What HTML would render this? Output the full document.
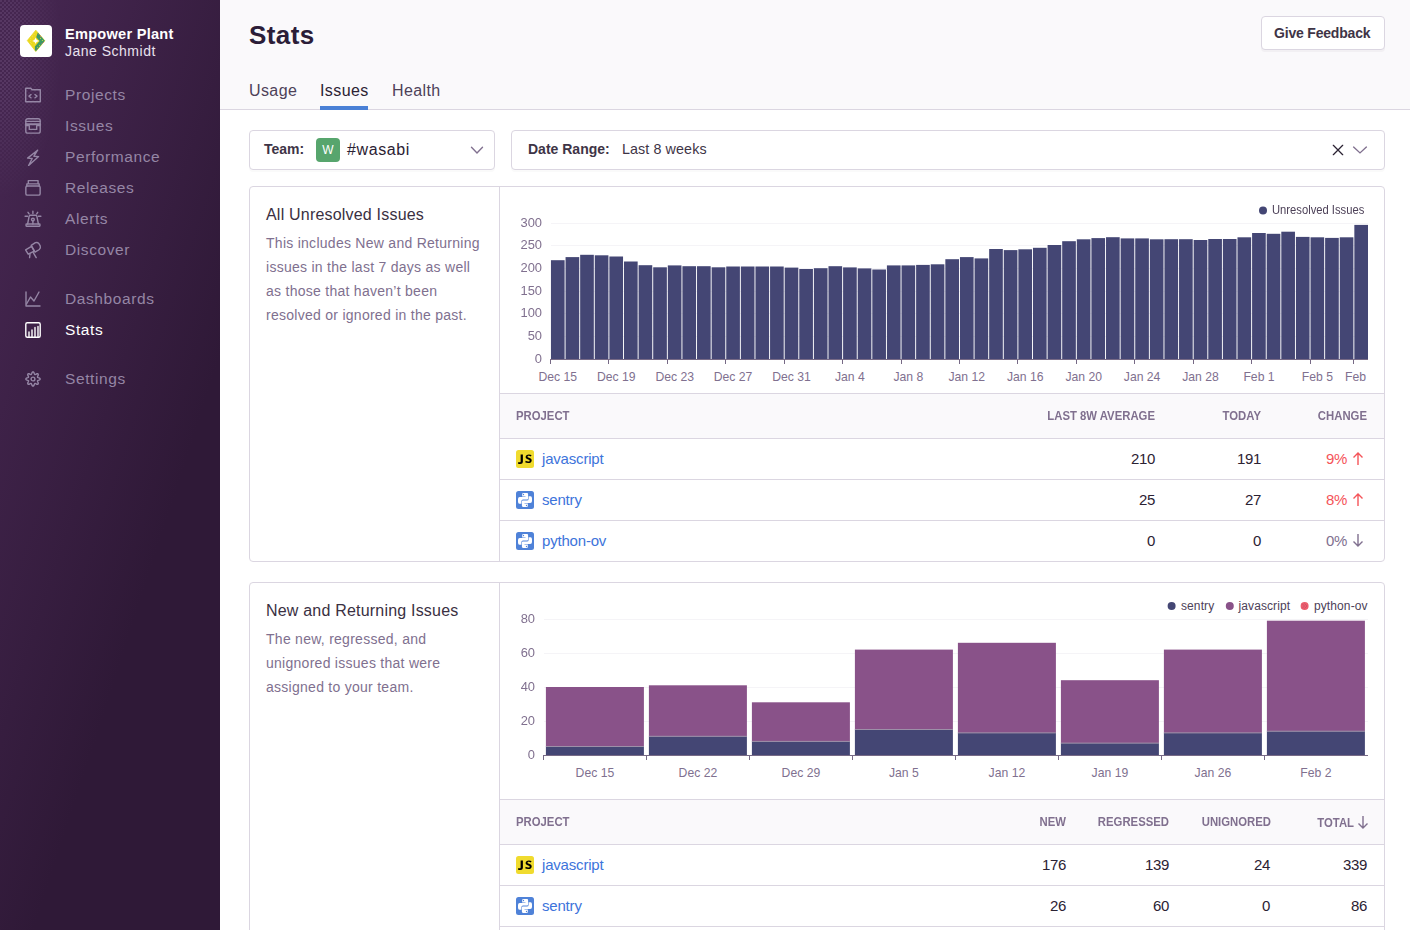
<!DOCTYPE html>
<html><head><meta charset="utf-8">
<style>
*{box-sizing:border-box;margin:0;padding:0}
html,body{width:1410px;height:930px;overflow:hidden;background:#fff;font-family:"Liberation Sans",sans-serif;color:#2b2233}
.abs{position:absolute}
#sidebar{position:absolute;left:0;top:0;width:220px;height:930px;background:linear-gradient(288deg,#2f1937 35.57%,#452650 92.42%)}
.nav{position:absolute;left:65px;font-size:15.5px;color:#9586a5;letter-spacing:0.6px;line-height:18px;white-space:nowrap}
.nav.active{color:#fff}
.nicon{position:absolute;left:24px;width:18px;height:18px}
#header{position:absolute;left:220px;top:0;width:1190px;height:110px;background:#faf9fb;border-bottom:1px solid #dbd6e1}
.tab{position:absolute;top:81.5px;font-size:16px;color:#4d4158;line-height:18px;letter-spacing:0.4px;white-space:nowrap}
.box{position:absolute;border:1px solid #dbd6e1;border-radius:4px;background:#fff;box-shadow:0 2px 0 rgba(43,34,51,0.025)}
.panel{position:absolute;left:249px;width:1136px;border:1px solid #dbd6e1;border-radius:4px;background:transparent;overflow:hidden}
.ptitle{position:absolute;left:16px;font-size:16px;letter-spacing:0.2px;color:#3a3042;white-space:nowrap;line-height:20px}
.pdesc{position:absolute;left:16px;font-size:14px;letter-spacing:0.27px;color:#80708f;line-height:24px;white-space:nowrap}
.divider{position:absolute;left:249px;top:0;width:1px;background:#dbd6e1}
.ylab{position:absolute;font-size:12px;color:#80708f;text-align:right;width:40px;line-height:14px;transform:scaleX(1.075);transform-origin:100% 50%}
.xlab{position:absolute;font-size:12.2px;color:#80708f;line-height:14px;white-space:nowrap;text-align:center;width:60px}
.th{position:absolute;font-size:12.2px;font-weight:bold;color:#80708f;line-height:14px;white-space:nowrap;text-transform:uppercase;transform:scaleX(0.93);transform-origin:100% 50%}
.th.l{transform-origin:0 50%}
.td{position:absolute;font-size:15px;letter-spacing:-0.35px;color:#2b2233;line-height:18px;white-space:nowrap;text-align:right}
.proj{position:absolute;font-size:15px;letter-spacing:-0.19px;color:#3d74db;line-height:18px;white-space:nowrap}
.hline{position:absolute;left:250px;width:886px;height:1px;background:#dbd6e1}
.thead{position:absolute;left:250px;width:886px;background:#faf9fb}

</style></head>
<body>
<div id="sidebar">
<div class="abs" style="left:0;top:0;width:70px;height:220px;background-image:radial-gradient(circle at 1px 1px, rgba(190,160,210,0.3) 0.5px, rgba(190,160,210,0) 0.9px),radial-gradient(circle at 3px 3px, rgba(190,160,210,0.3) 0.5px, rgba(190,160,210,0) 0.9px);background-size:4px 4px;-webkit-mask-image:radial-gradient(ellipse 62px 150px at 0 50px, #000 25%, transparent 100%);mask-image:radial-gradient(ellipse 62px 150px at 0 50px, #000 25%, transparent 100%)"></div>
<div class="abs" style="left:20px;top:25px;width:32px;height:32px;background:#fff;border-radius:4px"><svg width="32" height="32" viewBox="0 0 32 32" style="position:absolute;left:0;top:0"><path d="M15.8 5.2L24.8 15.8 15.8 26.5 7.3 15.6Z" fill="#ead81f" stroke="#ead81f" stroke-width="0.8" stroke-linejoin="round"/><path d="M17.8 7.6L24.8 15.8 15.9 26.3 14.9 25.1V21.4L19.6 16 16.2 12.3Z" fill="#3b9a64"/><path d="M15.6 12.6Q16 15.4 19.4 15.9 16 16.4 15.6 19.2 15.2 16.4 12.2 15.9 15.2 15.4 15.6 12.6Z" fill="#fff"/><g fill="#f4e86a"><circle cx="12.2" cy="10.9" r=".45"/><circle cx="14.1" cy="9.6" r=".45"/><circle cx="10.4" cy="13.3" r=".45"/><circle cx="10.4" cy="15.4" r=".45"/><circle cx="10.4" cy="17.5" r=".45"/><circle cx="12.2" cy="11.8" r=".45"/><circle cx="14.2" cy="19.9" r=".45"/><circle cx="11.5" cy="18.6" r=".45"/></g><g><circle cx="20.5" cy="13.3" r=".55" fill="#e5d73a"/><circle cx="22.4" cy="15.5" r=".55" fill="#e5d73a"/><circle cx="20.5" cy="11.5" r=".5" fill="#e0607a"/><circle cx="23.6" cy="17.5" r=".5" fill="#e0607a"/><circle cx="19.4" cy="20.2" r=".55" fill="#e5d73a"/><circle cx="17.4" cy="22.3" r=".55" fill="#e5d73a"/><circle cx="21.4" cy="18.3" r=".5" fill="#8a5aa6"/><circle cx="16.5" cy="24" r=".5" fill="#8a5aa6"/><circle cx="18.5" cy="9.5" r=".5" fill="#8a5aa6"/></g></svg></div>
<div class="abs" style="left:65px;top:25.5px;font-size:14.6px;font-weight:bold;color:#fff;line-height:17px;white-space:nowrap;letter-spacing:0.24px">Empower Plant</div>
<div class="abs" style="left:65px;top:43px;font-size:14px;color:#e8e1ee;line-height:17px;white-space:nowrap;letter-spacing:0.5px">Jane Schmidt</div>
<div class="nav" style="top:86px">Projects</div>
<div class="nav" style="top:117px">Issues</div>
<div class="nav" style="top:148px">Performance</div>
<div class="nav" style="top:179px">Releases</div>
<div class="nav" style="top:210px">Alerts</div>
<div class="nav" style="top:241px">Discover</div>
<div class="nav" style="top:290px">Dashboards</div>
<div class="nav active" style="top:321px">Stats</div>
<div class="nav" style="top:370px">Settings</div>
<svg class="nicon" style="top:86px" viewBox="0 0 18 18" fill="none" stroke="#9586a5" stroke-width="1.4" stroke-linejoin="round" stroke-linecap="round"><path d="M1.7 2.2h5l1.3 1.6h8.3v12H1.7z"/><path d="M7 8.5l-2 1.6 2 1.6M11 8.5l2 1.6-2 1.6"/></svg>
<svg class="nicon" style="top:117px" viewBox="0 0 18 18" fill="none" stroke="#9586a5" stroke-width="1.4" stroke-linejoin="round" stroke-linecap="round"><rect x="1.8" y="1.7" width="14.4" height="14.45" rx="2"/><path d="M1.8 4.4h14.4"/><path d="M1.8 7.3h14.4" stroke-width="1.9"/><path d="M1.8 8.6h3.5v3.8h7.4V8.6h3.5"/></svg>
<svg class="nicon" style="top:148px" viewBox="0 0 18 18" fill="none" stroke="#9586a5" stroke-width="1.4" stroke-linejoin="round" stroke-linecap="round"><path d="M13.6 2.2L3.6 10.1l4.6.4-3.6 7 10-8.9-4.7-.4z"/></svg>
<svg class="nicon" style="top:179px" viewBox="0 0 18 18" fill="none" stroke="#9586a5" stroke-width="1.4" stroke-linejoin="round" stroke-linecap="round"><rect x="1.85" y="7.05" width="14.3" height="9.1" rx="1.5"/><path d="M2.85 7.05V4.85h12.3v2.2M4.3 4.85V1.65h9.75v3.2"/></svg>
<svg class="nicon" style="top:210px" viewBox="0 0 18 18" fill="none" stroke="#9586a5" stroke-width="1.4" stroke-linejoin="round" stroke-linecap="round"><rect x="2.05" y="14" width="13.9" height="2.2" rx=".4"/><path d="M3.6 14l1.5-7.7q.2-1 1.2-1h5.4q1 0 1.2 1L14.4 14"/><circle cx="8.9" cy="9.6" r="1.4"/><path d="M8.9 11v3M8.9 1.1v2.4M4 2.3l1.1 1.6M13.7 2.3l-1 1.6M1.1 6.2h2.5M14.4 6.2h2.5"/></svg>
<svg class="nicon" style="top:241px" viewBox="0 0 18 18" fill="none" stroke="#9586a5" stroke-width="1.4" stroke-linejoin="round" stroke-linecap="round"><path d="M1.6 8.8L7.5 5.3 10.3 10.2 4.2 13.2Z"/><path d="M7.2 4.4L11.4 1.7Q13.5.9 14.9 2.6L16.2 4.8Q17 7.1 15.3 8.5L11 11.2Z"/><path d="M6 12.7l-.4 3.9M9.3 11.7l2.9 4.9"/></svg>
<svg class="nicon" style="top:290px" viewBox="0 0 18 18" fill="none" stroke="#9586a5" stroke-width="1.4" stroke-linejoin="round" stroke-linecap="round"><path d="M2 2v14h14"/><path d="M2.5 14l4-7 3.5 4 5-9"/></svg>
<svg class="nicon" style="top:321px" viewBox="0 0 18 18" fill="none" stroke="#fff" stroke-width="1.4" stroke-linejoin="round" stroke-linecap="round"><rect x="1.8" y="1.8" width="14.4" height="14.4" rx="1.5"/><path d="M5 15.5v-4.5M8 15.5V9M11 15.5V6.5M14 15.5v-10"/></svg>
<svg class="nicon" style="top:370px" viewBox="0 0 18 18" fill="none" stroke="#9586a5" stroke-width="1.4" stroke-linejoin="round" stroke-linecap="round"><path d="M16.15 9.00 L15.98 9.46 L15.52 9.86 L14.88 10.17 L14.24 10.40 L13.74 10.61 L13.48 10.86 L13.49 11.21 L13.70 11.71 L13.99 12.33 L14.22 13.00 L14.26 13.61 L14.06 14.06 L13.61 14.26 L13.00 14.22 L12.33 13.99 L11.71 13.70 L11.21 13.49 L10.86 13.48 L10.61 13.74 L10.40 14.24 L10.17 14.88 L9.86 15.52 L9.46 15.98 L9.00 16.15 L8.54 15.98 L8.14 15.52 L7.83 14.88 L7.60 14.24 L7.39 13.74 L7.14 13.48 L6.79 13.49 L6.29 13.70 L5.67 13.99 L5.00 14.22 L4.39 14.26 L3.94 14.06 L3.74 13.61 L3.78 13.00 L4.01 12.33 L4.30 11.71 L4.51 11.21 L4.52 10.86 L4.26 10.61 L3.76 10.40 L3.12 10.17 L2.48 9.86 L2.02 9.46 L1.85 9.00 L2.02 8.54 L2.48 8.14 L3.12 7.83 L3.76 7.60 L4.26 7.39 L4.52 7.14 L4.51 6.79 L4.30 6.29 L4.01 5.67 L3.78 5.00 L3.74 4.39 L3.94 3.94 L4.39 3.74 L5.00 3.78 L5.67 4.01 L6.29 4.30 L6.79 4.51 L7.14 4.52 L7.39 4.26 L7.60 3.76 L7.83 3.12 L8.14 2.48 L8.54 2.02 L9.00 1.85 L9.46 2.02 L9.86 2.48 L10.17 3.12 L10.40 3.76 L10.61 4.26 L10.86 4.52 L11.21 4.51 L11.71 4.30 L12.33 4.01 L13.00 3.78 L13.61 3.74 L14.06 3.94 L14.26 4.39 L14.22 5.00 L13.99 5.67 L13.70 6.29 L13.49 6.79 L13.48 7.14 L13.74 7.39 L14.24 7.60 L14.88 7.83 L15.52 8.14 L15.98 8.54Z"/><circle cx="9" cy="9" r="1.9"/></svg>
</div>
<div id="header">
<div class="abs" style="left:29px;top:20px;font-size:26px;font-weight:bold;color:#2b1d38;line-height:30px;letter-spacing:0.4px">Stats</div>
<div class="abs" style="left:1041px;top:16px;width:124px;height:34px;border:1px solid #dbd6e1;border-radius:4px;background:#fff;box-shadow:0 2px 0 rgba(43,34,51,0.04)"></div>
<div class="abs" style="left:1054px;top:25px;font-size:14px;font-weight:bold;color:#3e3446;line-height:16px;white-space:nowrap;letter-spacing:-0.19px">Give Feedback</div>
<div class="tab" style="left:29px">Usage</div>
<div class="tab" style="left:100px;color:#2b2233">Issues</div>
<div class="tab" style="left:172px">Health</div>
<div class="abs" style="left:100px;top:106px;width:48px;height:4px;background:#4a80d6"></div>
</div>
<div class="box" style="left:249px;top:130px;width:246px;height:40px"></div>
<div class="abs" style="left:264px;top:141px;font-size:14px;font-weight:bold;color:#3e3446;line-height:16px">Team:</div>
<div class="abs" style="left:316px;top:138px;width:24px;height:24px;background:#57a56d;border-radius:4px;color:#fff;font-size:12px;text-align:center;line-height:24px">W</div>
<div class="abs" style="left:347px;top:140px;font-size:16px;color:#2b2233;line-height:19px;letter-spacing:0.6px">#wasabi</div>
<svg class="abs" style="left:469px;top:144px" width="16" height="12" viewBox="0 0 16 12"><path d="M2.5 3.3L8 8.9l5.5-5.6" fill="none" stroke="#80708f" stroke-width="1.4" stroke-linecap="round"/></svg>
<div class="box" style="left:511px;top:130px;width:874px;height:40px"></div>
<div class="abs" style="left:528px;top:141px;font-size:14px;font-weight:bold;color:#3e3446;line-height:16px">Date Range:</div>
<div class="abs" style="left:622px;top:141px;font-size:14.3px;color:#3e3446;line-height:17px;letter-spacing:0.1px">Last 8 weeks</div>
<svg class="abs" style="left:1331px;top:143px" width="14" height="14" viewBox="0 0 14 14"><path d="M2.3 2.3l9.4 9.4M11.7 2.3l-9.4 9.4" fill="none" stroke="#2b2233" stroke-width="1.25" stroke-linecap="round"/></svg>
<svg class="abs" style="left:1351px;top:144px" width="18" height="12" viewBox="0 0 18 12"><path d="M2.6 3.1L9 8.9l6.4-5.8" fill="none" stroke="#80708f" stroke-width="1.4" stroke-linecap="round"/></svg>
<div class="panel" style="top:186px;height:376px">
<div class="divider" style="height:376px"></div>
<div class="ptitle" style="top:18px">All Unresolved Issues</div>
<div class="pdesc" style="top:44px">This includes New and Returning<br>issues in the last 7 days as well<br>as those that haven’t been<br>resolved or ignored in the past.</div>
</div>
<svg class="abs" style="left:0;top:0" width="1410" height="930" shape-rendering="crispEdges">
<rect x="551" y="336" width="817" height="1" fill="#f5f4f7"/>
<rect x="551" y="313" width="817" height="1" fill="#f5f4f7"/>
<rect x="551" y="291" width="817" height="1" fill="#f5f4f7"/>
<rect x="551" y="268" width="817" height="1" fill="#f5f4f7"/>
<rect x="551" y="245" width="817" height="1" fill="#f5f4f7"/>
<rect x="551" y="223" width="817" height="1" fill="#f5f4f7"/>
<rect x="550.95" y="260.2" width="13.66" height="98.8" fill="#444674" shape-rendering="geometricPrecision"/>
<rect x="565.56" y="257.1" width="13.66" height="101.9" fill="#444674" shape-rendering="geometricPrecision"/>
<rect x="580.16" y="254.8" width="13.66" height="104.2" fill="#444674" shape-rendering="geometricPrecision"/>
<rect x="594.77" y="255.3" width="13.66" height="103.7" fill="#444674" shape-rendering="geometricPrecision"/>
<rect x="609.38" y="256.5" width="13.66" height="102.5" fill="#444674" shape-rendering="geometricPrecision"/>
<rect x="623.99" y="261.5" width="13.66" height="97.5" fill="#444674" shape-rendering="geometricPrecision"/>
<rect x="638.59" y="265.2" width="13.66" height="93.8" fill="#444674" shape-rendering="geometricPrecision"/>
<rect x="653.20" y="267.3" width="13.66" height="91.7" fill="#444674" shape-rendering="geometricPrecision"/>
<rect x="667.81" y="265.4" width="13.66" height="93.6" fill="#444674" shape-rendering="geometricPrecision"/>
<rect x="682.41" y="266.2" width="13.66" height="92.8" fill="#444674" shape-rendering="geometricPrecision"/>
<rect x="697.02" y="266.2" width="13.66" height="92.8" fill="#444674" shape-rendering="geometricPrecision"/>
<rect x="711.63" y="267.3" width="13.66" height="91.7" fill="#444674" shape-rendering="geometricPrecision"/>
<rect x="726.23" y="266.5" width="13.66" height="92.5" fill="#444674" shape-rendering="geometricPrecision"/>
<rect x="740.84" y="266.5" width="13.66" height="92.5" fill="#444674" shape-rendering="geometricPrecision"/>
<rect x="755.45" y="266.5" width="13.66" height="92.5" fill="#444674" shape-rendering="geometricPrecision"/>
<rect x="770.06" y="266.5" width="13.66" height="92.5" fill="#444674" shape-rendering="geometricPrecision"/>
<rect x="784.66" y="267.6" width="13.66" height="91.4" fill="#444674" shape-rendering="geometricPrecision"/>
<rect x="799.27" y="269.0" width="13.66" height="90.0" fill="#444674" shape-rendering="geometricPrecision"/>
<rect x="813.88" y="268.2" width="13.66" height="90.8" fill="#444674" shape-rendering="geometricPrecision"/>
<rect x="828.48" y="266.2" width="13.66" height="92.8" fill="#444674" shape-rendering="geometricPrecision"/>
<rect x="843.09" y="267.4" width="13.66" height="91.6" fill="#444674" shape-rendering="geometricPrecision"/>
<rect x="857.70" y="268.4" width="13.66" height="90.6" fill="#444674" shape-rendering="geometricPrecision"/>
<rect x="872.30" y="269.5" width="13.66" height="89.5" fill="#444674" shape-rendering="geometricPrecision"/>
<rect x="886.91" y="265.4" width="13.66" height="93.6" fill="#444674" shape-rendering="geometricPrecision"/>
<rect x="901.52" y="265.4" width="13.66" height="93.6" fill="#444674" shape-rendering="geometricPrecision"/>
<rect x="916.12" y="264.9" width="13.66" height="94.1" fill="#444674" shape-rendering="geometricPrecision"/>
<rect x="930.73" y="264.3" width="13.66" height="94.7" fill="#444674" shape-rendering="geometricPrecision"/>
<rect x="945.34" y="259.2" width="13.66" height="99.8" fill="#444674" shape-rendering="geometricPrecision"/>
<rect x="959.95" y="257.1" width="13.66" height="101.9" fill="#444674" shape-rendering="geometricPrecision"/>
<rect x="974.55" y="258.4" width="13.66" height="100.6" fill="#444674" shape-rendering="geometricPrecision"/>
<rect x="989.16" y="249.0" width="13.66" height="110.0" fill="#444674" shape-rendering="geometricPrecision"/>
<rect x="1003.77" y="250.1" width="13.66" height="108.9" fill="#444674" shape-rendering="geometricPrecision"/>
<rect x="1018.37" y="249.3" width="13.66" height="109.7" fill="#444674" shape-rendering="geometricPrecision"/>
<rect x="1032.98" y="247.8" width="13.66" height="111.2" fill="#444674" shape-rendering="geometricPrecision"/>
<rect x="1047.59" y="245.0" width="13.66" height="114.0" fill="#444674" shape-rendering="geometricPrecision"/>
<rect x="1062.19" y="241.2" width="13.66" height="117.8" fill="#444674" shape-rendering="geometricPrecision"/>
<rect x="1076.80" y="239.3" width="13.66" height="119.7" fill="#444674" shape-rendering="geometricPrecision"/>
<rect x="1091.41" y="238.1" width="13.66" height="120.9" fill="#444674" shape-rendering="geometricPrecision"/>
<rect x="1106.02" y="237.2" width="13.66" height="121.8" fill="#444674" shape-rendering="geometricPrecision"/>
<rect x="1120.62" y="238.4" width="13.66" height="120.6" fill="#444674" shape-rendering="geometricPrecision"/>
<rect x="1135.23" y="238.4" width="13.66" height="120.6" fill="#444674" shape-rendering="geometricPrecision"/>
<rect x="1149.84" y="239.3" width="13.66" height="119.7" fill="#444674" shape-rendering="geometricPrecision"/>
<rect x="1164.44" y="239.2" width="13.66" height="119.8" fill="#444674" shape-rendering="geometricPrecision"/>
<rect x="1179.05" y="239.2" width="13.66" height="119.8" fill="#444674" shape-rendering="geometricPrecision"/>
<rect x="1193.66" y="240.0" width="13.66" height="119.0" fill="#444674" shape-rendering="geometricPrecision"/>
<rect x="1208.27" y="239.0" width="13.66" height="120.0" fill="#444674" shape-rendering="geometricPrecision"/>
<rect x="1222.87" y="239.0" width="13.66" height="120.0" fill="#444674" shape-rendering="geometricPrecision"/>
<rect x="1237.48" y="237.3" width="13.66" height="121.7" fill="#444674" shape-rendering="geometricPrecision"/>
<rect x="1252.09" y="233.0" width="13.66" height="126.0" fill="#444674" shape-rendering="geometricPrecision"/>
<rect x="1266.69" y="233.8" width="13.66" height="125.2" fill="#444674" shape-rendering="geometricPrecision"/>
<rect x="1281.30" y="231.7" width="13.66" height="127.3" fill="#444674" shape-rendering="geometricPrecision"/>
<rect x="1295.91" y="236.9" width="13.66" height="122.1" fill="#444674" shape-rendering="geometricPrecision"/>
<rect x="1310.51" y="237.3" width="13.66" height="121.7" fill="#444674" shape-rendering="geometricPrecision"/>
<rect x="1325.12" y="237.9" width="13.66" height="121.1" fill="#444674" shape-rendering="geometricPrecision"/>
<rect x="1339.73" y="237.3" width="13.66" height="121.7" fill="#444674" shape-rendering="geometricPrecision"/>
<rect x="1354.34" y="224.9" width="13.66" height="134.1" fill="#444674" shape-rendering="geometricPrecision"/>
<rect x="550" y="359" width="818" height="1" fill="#776a86"/>
<rect x="550" y="359" width="1" height="5" fill="#776a86"/>
<rect x="608" y="359" width="1" height="5" fill="#776a86"/>
<rect x="667" y="359" width="1" height="5" fill="#776a86"/>
<rect x="725" y="359" width="1" height="5" fill="#776a86"/>
<rect x="784" y="359" width="1" height="5" fill="#776a86"/>
<rect x="842" y="359" width="1" height="5" fill="#776a86"/>
<rect x="901" y="359" width="1" height="5" fill="#776a86"/>
<rect x="959" y="359" width="1" height="5" fill="#776a86"/>
<rect x="1017" y="359" width="1" height="5" fill="#776a86"/>
<rect x="1076" y="359" width="1" height="5" fill="#776a86"/>
<rect x="1134" y="359" width="1" height="5" fill="#776a86"/>
<rect x="1193" y="359" width="1" height="5" fill="#776a86"/>
<rect x="1251" y="359" width="1" height="5" fill="#776a86"/>
<rect x="1310" y="359" width="1" height="5" fill="#776a86"/>
<rect x="1353" y="359" width="1" height="5" fill="#776a86"/>
<rect x="544" y="721" width="824" height="1" fill="#f5f4f7"/>
<rect x="544" y="687" width="824" height="1" fill="#f5f4f7"/>
<rect x="544" y="653" width="824" height="1" fill="#f5f4f7"/>
<rect x="544" y="619" width="824" height="1" fill="#f5f4f7"/>
<rect x="545.9" y="687.0" width="98" height="59.5" fill="#895289" shape-rendering="geometricPrecision"/>
<rect x="545.9" y="746.5" width="98" height="8.5" fill="#444674" shape-rendering="geometricPrecision"/>
<rect x="545.9" y="746.0" width="98" height="1" fill="#9d90a8" shape-rendering="geometricPrecision"/>
<rect x="648.9" y="685.3" width="98" height="51.0" fill="#895289" shape-rendering="geometricPrecision"/>
<rect x="648.9" y="736.3" width="98" height="18.7" fill="#444674" shape-rendering="geometricPrecision"/>
<rect x="648.9" y="735.8" width="98" height="1" fill="#9d90a8" shape-rendering="geometricPrecision"/>
<rect x="751.9" y="702.3" width="98" height="39.1" fill="#895289" shape-rendering="geometricPrecision"/>
<rect x="751.9" y="741.4" width="98" height="13.6" fill="#444674" shape-rendering="geometricPrecision"/>
<rect x="751.9" y="740.9" width="98" height="1" fill="#9d90a8" shape-rendering="geometricPrecision"/>
<rect x="854.9" y="649.6" width="98" height="79.9" fill="#895289" shape-rendering="geometricPrecision"/>
<rect x="854.9" y="729.5" width="98" height="25.5" fill="#444674" shape-rendering="geometricPrecision"/>
<rect x="854.9" y="729.0" width="98" height="1" fill="#9d90a8" shape-rendering="geometricPrecision"/>
<rect x="957.9" y="642.8" width="98" height="90.1" fill="#895289" shape-rendering="geometricPrecision"/>
<rect x="957.9" y="732.9" width="98" height="22.1" fill="#444674" shape-rendering="geometricPrecision"/>
<rect x="957.9" y="732.4" width="98" height="1" fill="#9d90a8" shape-rendering="geometricPrecision"/>
<rect x="1060.9" y="680.2" width="98" height="62.9" fill="#895289" shape-rendering="geometricPrecision"/>
<rect x="1060.9" y="743.1" width="98" height="11.9" fill="#444674" shape-rendering="geometricPrecision"/>
<rect x="1060.9" y="742.6" width="98" height="1" fill="#9d90a8" shape-rendering="geometricPrecision"/>
<rect x="1163.9" y="649.6" width="98" height="83.3" fill="#895289" shape-rendering="geometricPrecision"/>
<rect x="1163.9" y="732.9" width="98" height="22.1" fill="#444674" shape-rendering="geometricPrecision"/>
<rect x="1163.9" y="732.4" width="98" height="1" fill="#9d90a8" shape-rendering="geometricPrecision"/>
<rect x="1266.9" y="620.7" width="98" height="110.5" fill="#895289" shape-rendering="geometricPrecision"/>
<rect x="1266.9" y="731.2" width="98" height="23.8" fill="#444674" shape-rendering="geometricPrecision"/>
<rect x="1266.9" y="730.7" width="98" height="1" fill="#9d90a8" shape-rendering="geometricPrecision"/>
<rect x="543" y="755" width="825" height="1" fill="#776a86"/>
<rect x="543" y="755" width="1" height="5" fill="#776a86"/>
<rect x="646" y="755" width="1" height="5" fill="#776a86"/>
<rect x="749" y="755" width="1" height="5" fill="#776a86"/>
<rect x="852" y="755" width="1" height="5" fill="#776a86"/>
<rect x="955" y="755" width="1" height="5" fill="#776a86"/>
<rect x="1058" y="755" width="1" height="5" fill="#776a86"/>
<rect x="1161" y="755" width="1" height="5" fill="#776a86"/>
<rect x="1264" y="755" width="1" height="5" fill="#776a86"/>
<circle cx="1263" cy="210.5" r="4" fill="#444674" shape-rendering="geometricPrecision"/>
<circle cx="1171.6" cy="606" r="4" fill="#444674" shape-rendering="geometricPrecision"/>
<circle cx="1229.8" cy="606" r="4" fill="#895289" shape-rendering="geometricPrecision"/>
<circle cx="1304.6" cy="606" r="4" fill="#ec5e6c" shape-rendering="geometricPrecision"/><path d="M1302 603.5l2.5 2.5-2.5 2.5M1304.5 603.5l2.5 2.5-2.5 2.5" fill="none" stroke="#c84a6a" stroke-width="0.7" shape-rendering="geometricPrecision"/>
</svg>
<div class="ylab" style="left:502px;top:351.5px">0</div>
<div class="ylab" style="left:502px;top:328.8px">50</div>
<div class="ylab" style="left:502px;top:306.2px">100</div>
<div class="ylab" style="left:502px;top:283.5px">150</div>
<div class="ylab" style="left:502px;top:260.8px">200</div>
<div class="ylab" style="left:502px;top:238.2px">250</div>
<div class="ylab" style="left:502px;top:215.5px">300</div>
<div class="xlab" style="left:527.8px;top:369.7px">Dec 15</div>
<div class="xlab" style="left:586.2px;top:369.7px">Dec 19</div>
<div class="xlab" style="left:644.7px;top:369.7px">Dec 23</div>
<div class="xlab" style="left:703.1px;top:369.7px">Dec 27</div>
<div class="xlab" style="left:761.5px;top:369.7px">Dec 31</div>
<div class="xlab" style="left:819.9px;top:369.7px">Jan 4</div>
<div class="xlab" style="left:878.4px;top:369.7px">Jan 8</div>
<div class="xlab" style="left:936.8px;top:369.7px">Jan 12</div>
<div class="xlab" style="left:995.2px;top:369.7px">Jan 16</div>
<div class="xlab" style="left:1053.7px;top:369.7px">Jan 20</div>
<div class="xlab" style="left:1112.1px;top:369.7px">Jan 24</div>
<div class="xlab" style="left:1170.5px;top:369.7px">Jan 28</div>
<div class="xlab" style="left:1229.0px;top:369.7px">Feb 1</div>
<div class="xlab" style="left:1287.4px;top:369.7px">Feb 5</div>
<div class="xlab" style="left:1325.6px;top:369.7px">Feb</div>
<div class="abs" style="left:1272px;top:203.3px;font-size:12px;color:#4d4158;line-height:14px;white-space:nowrap;transform:scaleX(0.935);transform-origin:0 50%">Unresolved Issues</div>
<div class="abs" style="left:500px;top:393px;width:884px;height:46px;background:#faf9fb;border-top:1px solid #dbd6e1;border-bottom:1px solid #dbd6e1"></div>
<div class="abs" style="left:500px;top:479px;width:884px;height:1px;background:#dbd6e1"></div>
<div class="abs" style="left:500px;top:520px;width:884px;height:1px;background:#dbd6e1"></div>
<div class="th l" style="left:516px;top:409.2px">Project</div>
<div class="th" style="left:955px;top:409.2px;width:200px;text-align:right">Last 8W Average</div>
<div class="th" style="left:1161px;top:409.2px;width:100px;text-align:right">Today</div>
<div class="th" style="left:1267px;top:409.2px;width:100px;text-align:right">Change</div>
<div class="abs" style="left:516px;top:450px;width:18px;height:18px;background:#f0db2e;border-radius:2.5px;"><svg width="18" height="18" viewBox="0 0 18 18" style="position:absolute;left:0;top:0"><g transform="matrix(1.19 0 0 1.044 -1.79 -0.3)"><path d="M7.3 4.6v6.6c0 1.6-.8 2.4-2.3 2.4-.8 0-1.4-.2-1.9-.5l.4-1.3c.3.2.7.3 1.1.3.5 0 .8-.3.8-1.1V4.6z" fill="#000"/><path d="M14.6 5.2c-.5-.4-1.3-.7-2.2-.7-1.7 0-2.8 1-2.8 2.4 0 1.3.9 1.9 2.1 2.4 1 .4 1.3.7 1.3 1.2s-.4.9-1.2.9c-.8 0-1.6-.4-2.1-.8l-.5 1.4c.6.5 1.5.8 2.5.8 1.9 0 3-1 3-2.5 0-1.3-.8-2-2.2-2.5-1-.4-1.3-.6-1.3-1.1 0-.4.3-.8 1-.8.7 0 1.3.3 1.7.6z" fill="#000"/></g></svg></div>
<div class="proj" style="left:542px;top:450px">javascript</div>
<div class="td" style="left:1055px;width:100px;top:450px">210</div>
<div class="td" style="left:1161px;width:100px;top:450px">191</div>
<div class="td" style="left:1247px;width:100px;top:450px;color:#f55459">9%</div>
<svg class="abs" style="left:1351px;top:451px" width="14" height="15" viewBox="0 0 14 15"><path d="M7 2v12M2.5 6.5L7 2l4.5 4.5" fill="none" stroke="#f55459" stroke-width="1.4"/></svg>
<div class="abs" style="left:516px;top:491px;width:18px;height:18px;background:#4f82d8;border-radius:2.5px;"><svg width="18" height="18" viewBox="0 0 18 18" style="position:absolute;left:0;top:0"><path d="M6.3 2.1H11Q12.1 2.1 12.1 3.2V7.5Q12.1 8.5 11.1 8.5H7Q5.4 8.5 5.4 10.1V12.7H3.4Q2 12.7 2 10.5V8Q2 5.9 3.8 5.9H9.5V5.4H6.2V3.1Q6.2 2.1 7.2 2.1Z" fill="#fff"/><path d="M6.3 2.1H11Q12.1 2.1 12.1 3.2V7.5Q12.1 8.5 11.1 8.5H7Q5.4 8.5 5.4 10.1V12.7H3.4Q2 12.7 2 10.5V8Q2 5.9 3.8 5.9H9.5V5.4H6.2V3.1Q6.2 2.1 7.2 2.1Z" fill="#fff" transform="rotate(180 9 9)"/><circle cx="7.5" cy="3.5" r=".65" fill="#4f82d8"/><circle cx="10.5" cy="14.5" r=".65" fill="#4f82d8"/></svg></div>
<div class="proj" style="left:542px;top:491px">sentry</div>
<div class="td" style="left:1055px;width:100px;top:491px">25</div>
<div class="td" style="left:1161px;width:100px;top:491px">27</div>
<div class="td" style="left:1247px;width:100px;top:491px;color:#f55459">8%</div>
<svg class="abs" style="left:1351px;top:492px" width="14" height="15" viewBox="0 0 14 15"><path d="M7 2v12M2.5 6.5L7 2l4.5 4.5" fill="none" stroke="#f55459" stroke-width="1.4"/></svg>
<div class="abs" style="left:516px;top:532px;width:18px;height:18px;background:#4f82d8;border-radius:2.5px;"><svg width="18" height="18" viewBox="0 0 18 18" style="position:absolute;left:0;top:0"><path d="M6.3 2.1H11Q12.1 2.1 12.1 3.2V7.5Q12.1 8.5 11.1 8.5H7Q5.4 8.5 5.4 10.1V12.7H3.4Q2 12.7 2 10.5V8Q2 5.9 3.8 5.9H9.5V5.4H6.2V3.1Q6.2 2.1 7.2 2.1Z" fill="#fff"/><path d="M6.3 2.1H11Q12.1 2.1 12.1 3.2V7.5Q12.1 8.5 11.1 8.5H7Q5.4 8.5 5.4 10.1V12.7H3.4Q2 12.7 2 10.5V8Q2 5.9 3.8 5.9H9.5V5.4H6.2V3.1Q6.2 2.1 7.2 2.1Z" fill="#fff" transform="rotate(180 9 9)"/><circle cx="7.5" cy="3.5" r=".65" fill="#4f82d8"/><circle cx="10.5" cy="14.5" r=".65" fill="#4f82d8"/></svg></div>
<div class="proj" style="left:542px;top:532px">python-ov</div>
<div class="td" style="left:1055px;width:100px;top:532px">0</div>
<div class="td" style="left:1161px;width:100px;top:532px">0</div>
<div class="td" style="left:1247px;width:100px;top:532px;color:#80708f">0%</div>
<svg class="abs" style="left:1351px;top:533px" width="14" height="15" viewBox="0 0 14 15"><path d="M7 1v12M2.5 8.5L7 13l4.5-4.5" fill="none" stroke="#80708f" stroke-width="1.4"/></svg>
<div class="panel" style="top:582px;height:400px">
<div class="divider" style="height:400px"></div>
<div class="ptitle" style="top:18px">New and Returning Issues</div>
<div class="pdesc" style="top:44px">The new, regressed, and<br>unignored issues that were<br>assigned to your team.</div>
</div>
<div class="ylab" style="left:495px;top:748.0px">0</div>
<div class="ylab" style="left:495px;top:714.0px">20</div>
<div class="ylab" style="left:495px;top:680.0px">40</div>
<div class="ylab" style="left:495px;top:646.0px">60</div>
<div class="ylab" style="left:495px;top:612.0px">80</div>
<div class="xlab" style="left:564.9px;top:766px">Dec 15</div>
<div class="xlab" style="left:667.9px;top:766px">Dec 22</div>
<div class="xlab" style="left:770.9px;top:766px">Dec 29</div>
<div class="xlab" style="left:873.9px;top:766px">Jan 5</div>
<div class="xlab" style="left:976.9px;top:766px">Jan 12</div>
<div class="xlab" style="left:1079.9px;top:766px">Jan 19</div>
<div class="xlab" style="left:1182.9px;top:766px">Jan 26</div>
<div class="xlab" style="left:1285.9px;top:766px">Feb 2</div>
<div class="abs" style="left:1181px;top:599.3px;font-size:12px;color:#4d4158;line-height:14px;white-space:nowrap;letter-spacing:0.1px">sentry</div>
<div class="abs" style="left:1238.5px;top:599.3px;font-size:12px;color:#4d4158;line-height:14px;white-space:nowrap;letter-spacing:0.1px">javascript</div>
<div class="abs" style="left:1314px;top:599.3px;font-size:12px;color:#4d4158;line-height:14px;white-space:nowrap;letter-spacing:0.1px">python-ov</div>
<div class="abs" style="left:500px;top:799px;width:884px;height:46px;background:#faf9fb;border-top:1px solid #dbd6e1;border-bottom:1px solid #dbd6e1"></div>
<div class="abs" style="left:500px;top:885px;width:884px;height:1px;background:#dbd6e1"></div>
<div class="abs" style="left:500px;top:926px;width:884px;height:1px;background:#dbd6e1"></div>
<div class="th l" style="left:516px;top:815.2px">Project</div>
<div class="th" style="left:966px;top:815.2px;width:100px;text-align:right">New</div>
<div class="th" style="left:1069px;top:815.2px;width:100px;text-align:right">Regressed</div>
<div class="th" style="left:1171px;top:815.2px;width:100px;text-align:right">Unignored</div>
<div class="th" style="left:1253.7px;top:816px;width:100px;text-align:right">Total</div>
<svg class="abs" style="left:1355.5px;top:814.5px" width="14" height="15" viewBox="0 0 14 15"><path d="M7 1v12M2.5 8.5L7 13l4.5-4.5" fill="none" stroke="#80708f" stroke-width="1.4"/></svg>
<div class="abs" style="left:516px;top:856px;width:18px;height:18px;background:#f0db2e;border-radius:2.5px;"><svg width="18" height="18" viewBox="0 0 18 18" style="position:absolute;left:0;top:0"><g transform="matrix(1.19 0 0 1.044 -1.79 -0.3)"><path d="M7.3 4.6v6.6c0 1.6-.8 2.4-2.3 2.4-.8 0-1.4-.2-1.9-.5l.4-1.3c.3.2.7.3 1.1.3.5 0 .8-.3.8-1.1V4.6z" fill="#000"/><path d="M14.6 5.2c-.5-.4-1.3-.7-2.2-.7-1.7 0-2.8 1-2.8 2.4 0 1.3.9 1.9 2.1 2.4 1 .4 1.3.7 1.3 1.2s-.4.9-1.2.9c-.8 0-1.6-.4-2.1-.8l-.5 1.4c.6.5 1.5.8 2.5.8 1.9 0 3-1 3-2.5 0-1.3-.8-2-2.2-2.5-1-.4-1.3-.6-1.3-1.1 0-.4.3-.8 1-.8.7 0 1.3.3 1.7.6z" fill="#000"/></g></svg></div>
<div class="proj" style="left:542px;top:856px">javascript</div>
<div class="td" style="left:966px;width:100px;top:856px">176</div>
<div class="td" style="left:1069px;width:100px;top:856px">139</div>
<div class="td" style="left:1170px;width:100px;top:856px">24</div>
<div class="td" style="left:1267px;width:100px;top:856px">339</div>
<div class="abs" style="left:516px;top:897px;width:18px;height:18px;background:#4f82d8;border-radius:2.5px;"><svg width="18" height="18" viewBox="0 0 18 18" style="position:absolute;left:0;top:0"><path d="M6.3 2.1H11Q12.1 2.1 12.1 3.2V7.5Q12.1 8.5 11.1 8.5H7Q5.4 8.5 5.4 10.1V12.7H3.4Q2 12.7 2 10.5V8Q2 5.9 3.8 5.9H9.5V5.4H6.2V3.1Q6.2 2.1 7.2 2.1Z" fill="#fff"/><path d="M6.3 2.1H11Q12.1 2.1 12.1 3.2V7.5Q12.1 8.5 11.1 8.5H7Q5.4 8.5 5.4 10.1V12.7H3.4Q2 12.7 2 10.5V8Q2 5.9 3.8 5.9H9.5V5.4H6.2V3.1Q6.2 2.1 7.2 2.1Z" fill="#fff" transform="rotate(180 9 9)"/><circle cx="7.5" cy="3.5" r=".65" fill="#4f82d8"/><circle cx="10.5" cy="14.5" r=".65" fill="#4f82d8"/></svg></div>
<div class="proj" style="left:542px;top:897px">sentry</div>
<div class="td" style="left:966px;width:100px;top:897px">26</div>
<div class="td" style="left:1069px;width:100px;top:897px">60</div>
<div class="td" style="left:1170px;width:100px;top:897px">0</div>
<div class="td" style="left:1267px;width:100px;top:897px">86</div>
</body></html>
